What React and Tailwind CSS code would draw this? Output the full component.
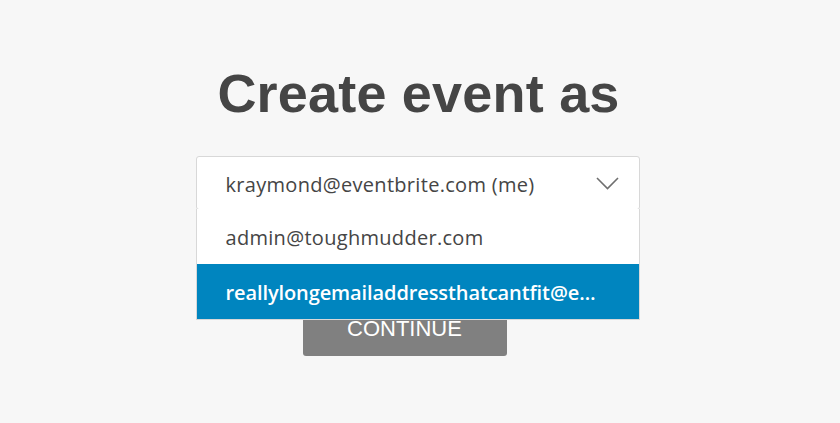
import React from 'react';

const textFont = { fontFamily: '"Open Sans", "Liberation Sans", sans-serif' };

function Chevron() {
    return (
        <svg width="23" height="13" viewBox="0 0 23 13" fill="none">
            <path d="M1 1 L11.5 11.5 L22 1" stroke="#6f6f6f" strokeWidth="1.6" />
        </svg>
    );
}

export default function App() {
    const options = [
        { id: 1, label: 'admin@toughmudder.com', active: false },
        { id: 2, label: 'reallylongemailaddressthatcantfit@eventbrite.com', active: true },
    ];

    return (
        <div className="w-[840px] h-[423px] bg-[#f7f7f7] flex flex-col items-center overflow-hidden">
            <h1 className="mt-[61px] ml-[-3px] text-[54px] leading-[64px] font-bold text-[#454545] font-['Liberation_Sans',Arial,sans-serif] tracking-[0.2px]">
                Create event as
            </h1>

            <div className="relative mt-[31px] ml-[-5px] w-[444px]">
                <div className="h-[54px] bg-white border border-[#d8d8d8] rounded-[3px] flex items-center justify-between pl-[29px] pr-[20px]">
                    <span className="pt-[3px] text-[20px] tracking-[0.3px] text-[#454545]" style={textFont}>kraymond@eventbrite.com (me)</span>
                    <Chevron />
                </div>

                <ul className="absolute left-0 right-0 top-[53px] border border-[#d8d8d8] border-t-0 bg-white">
                    {options.map((opt) => (
                        <li
                            key={opt.id}
                            className={`h-[55px] flex items-center pl-[29px] pr-[39px] pt-[3px] text-[20px] ${opt.active ? 'bg-[#0085bf] text-white font-semibold tracking-[-0.1px]' : 'text-[#454545] tracking-[0.3px]'}`}
                            style={textFont}
                        >
                            <span className="truncate">{opt.label}</span>
                        </li>
                    ))}
                </ul>

                <div className="flex mt-[91px] ml-[107px]">
                    <button className="w-[204px] h-[55px] bg-[#808080] text-white rounded-[3px] text-[22px] font-['Liberation_Sans',Arial,sans-serif] uppercase">
                        Continue
                    </button>
                </div>
            </div>
        </div>
    );
}
